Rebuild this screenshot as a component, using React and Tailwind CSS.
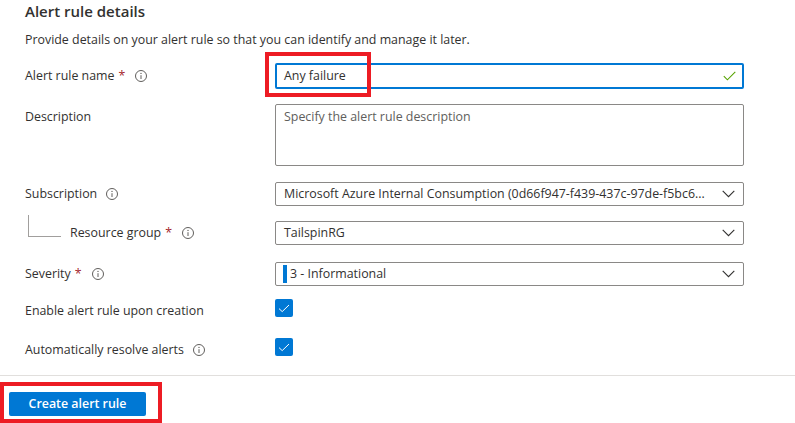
import React from "react";

const font = "font-['Segoe_UI','Open_Sans','Noto_Sans',sans-serif]";

function Info({ className = "" }) {
  return (
    <svg width="12" height="12" viewBox="0 0 12 12" className={"shrink-0 " + className}>
      <circle cx="6" cy="6" r="5.5" fill="none" stroke="#605e5c" strokeWidth="1" />
      <line x1="6" y1="5.2" x2="6" y2="9" stroke="#605e5c" strokeWidth="1" />
      <circle cx="6" cy="3.4" r="0.7" fill="#605e5c" />
    </svg>
  );
}

function Chevron() {
  return (
    <svg width="13" height="8" viewBox="0 0 13 8" className="shrink-0">
      <path d="M0.7 0.8 L6.5 6.6 L12.3 0.8" fill="none" stroke="#323130" strokeWidth="1.1" />
    </svg>
  );
}

function Req() {
  return <span className="ml-[4px] text-[#a4262c]">*</span>;
}

function Label({ children, className = "" }) {
  return <div className={"w-[250px] shrink-0 flex items-center leading-[24px] " + className}>{children}</div>;
}

function Dropdown({ children }) {
  return (
    <div className="w-[469px] h-[24px] border border-[#8a8886] rounded-[2px] flex items-center pl-[8px] pr-[8px]">
      <div className="flex-1 min-w-0 flex items-center whitespace-nowrap">{children}</div>
      <Chevron />
    </div>
  );
}

function Checkbox() {
  return (
    <div className="w-[18px] h-[18px] rounded-[2px] bg-[#0078d4] flex items-center justify-center">
      <svg width="12" height="9" viewBox="0 0 12 9">
        <path d="M1 4.6 L4.2 7.6 L11 1" fill="none" stroke="#ffffff" strokeWidth="1" />
      </svg>
    </div>
  );
}

export default function App() {
  return (
    <div className={"relative w-[795px] h-[423px] overflow-hidden bg-white text-[12.4px] text-[#323130] " + font}>
      <div className="pl-[25px]">
        <h2 className="text-[15px] font-semibold leading-[22px] h-[22px]">Alert rule details</h2>
        <p className="mt-[9px] leading-[18px]">
          Provide details on your alert rule so that you can identify and manage it later.
        </p>

        <div className="mt-[14px] flex items-center">
          <Label>
            Alert rule name<Req />
            <Info className="ml-[10px]" />
          </Label>
          <div className="w-[469px] h-[26px] border-2 border-[#0078d4] rounded-[2px] flex items-center pl-[7px] pr-[6px]">
            <span className="flex-1">Any failure</span>
            <svg width="13" height="10" viewBox="0 0 13 10">
              <path d="M0.8 5.2 L4.4 8.8 L12.3 0.8" fill="none" stroke="#57a300" strokeWidth="1.1" />
            </svg>
          </div>
        </div>

        <div className="mt-[15px] flex items-start">
          <Label className="pt-[1px]">Description</Label>
          <div className="w-[469px] h-[62px] border border-[#8a8886] rounded-[2px] px-[8px] pt-[0px] text-[#605e5c] leading-[24px]">
            Specify the alert rule description
          </div>
        </div>

        <div className="mt-[16px] flex items-center">
          <Label>
            Subscription
            <Info className="ml-[9px]" />
          </Label>
          <Dropdown>
            Microsoft Azure Internal Consumption (0d66f947-f439-437c-97de-f5bc6...
          </Dropdown>
        </div>

        <div className="mt-[15px] flex items-center">
          <Label>
            <div className="ml-[3px] w-[33px] h-[22px] -mt-[14px] border-l border-b border-[#a19f9d]" />
            <span className="ml-[9px]">Resource group</span>
            <Req />
            <Info className="ml-[10px]" />
          </Label>
          <Dropdown>TailspinRG</Dropdown>
        </div>

        <div className="mt-[17px] flex items-center">
          <Label>
            Severity<Req />
            <Info className="ml-[10px]" />
          </Label>
          <Dropdown>
            <span className="w-[4px] h-[18px] bg-[#0078d4] mr-[3px] -ml-[1px]" />
            3 - Informational
          </Dropdown>
        </div>

        <div className="mt-[13px] flex items-start">
          <Label>Enable alert rule upon creation</Label>
          <Checkbox />
        </div>

        <div className="mt-[15px] flex items-start">
          <Label>
            Automatically resolve alerts
            <Info className="ml-[9px]" />
          </Label>
          <Checkbox />
        </div>
      </div>

      <div className="mt-[13px] border-t border-[#e1dfdd] pt-[16px] pl-[9px]">
        <button className="w-[137px] h-[24px] bg-[#0078d4] rounded-[2px] text-white font-semibold text-[12.4px] leading-[24px]">
          Create alert rule
        </button>
      </div>

      <div className="absolute left-[265px] top-[52px] w-[106px] h-[45px] border-[4px] border-[#ed1c24]" />
      <div className="absolute left-[0px] top-[382px] w-[162px] h-[41px] border-[4px] border-[#ed1c24]" />
    </div>
  );
}
